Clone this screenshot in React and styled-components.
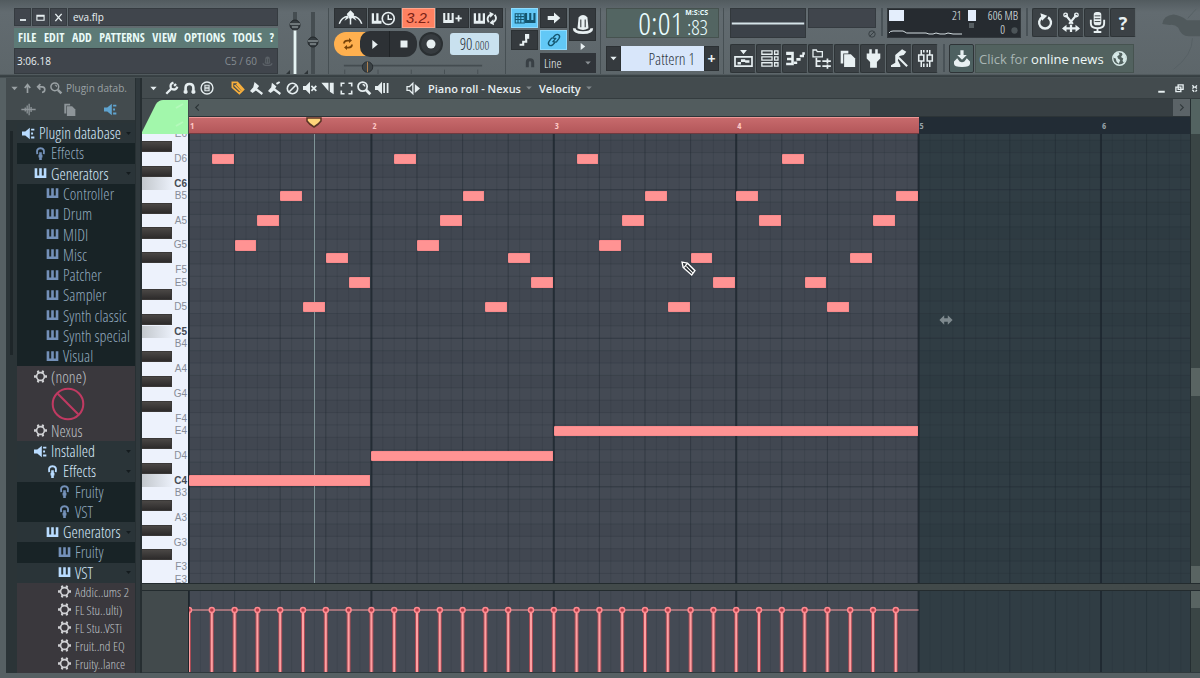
import React from "react";
import styled, { createGlobalStyle, css } from "styled-components";

const BARS = 5.488;
const STEPS = BARS * 8;
const ROWS = 36.27;
const TOP_CUT = 0.5;
const SONG_STEPS = 32;

const NAMES = ["E", "D#", "D", "C#", "C", "B", "A#", "A", "G#", "G", "F#", "F"];

// keys from E6 down to E3
const keys = Array.from({ length: 37 }, (_, i) => {
    const name = NAMES[i % 12];
    const octave = 6 - Math.floor((i + 7) / 12);
    return { name, octave, label: name + octave, black: name.includes("#") };
});

const rowOf = (label) => keys.findIndex((k) => k.label === label);
const pctX = (step) => `${(step / STEPS) * 100}%`;
const pctY = (row) => `${((row - TOP_CUT) / ROWS) * 100}%`;

const notes = [
    ...[0, 8, 16].flatMap((s) => [
        ["D6", s + 1, 1], ["G5", s + 2, 1], ["A5", s + 3, 1], ["B5", s + 4, 1],
        ["D5", s + 5, 1], ["F#5", s + 6, 1], ["E5", s + 7, 1],
    ]),
    ["B5", 24, 1], ["A5", 25, 1], ["D6", 26, 1], ["E5", 27, 1],
    ["D5", 28, 1], ["F#5", 29, 1], ["A5", 30, 1], ["B5", 31, 1],
    ["C4", 0, 8], ["D4", 8, 8], ["E4", 16, 16],
];

const tree = [
    { text: "Plugin database", level: 0, icon: "plug", kind: "open" },
    { text: "Effects", level: 1, icon: "fx", kind: "closed" },
    { text: "Generators", level: 1, icon: "keys", kind: "open" },
    { text: "Controller", level: 2, icon: "keys", kind: "closed" },
    { text: "Drum", level: 2, icon: "keys", kind: "closed" },
    { text: "MIDI", level: 2, icon: "keys", kind: "closed" },
    { text: "Misc", level: 2, icon: "keys", kind: "closed" },
    { text: "Patcher", level: 2, icon: "keys", kind: "closed" },
    { text: "Sampler", level: 2, icon: "keys", kind: "closed" },
    { text: "Synth classic", level: 2, icon: "keys", kind: "closed" },
    { text: "Synth special", level: 2, icon: "keys", kind: "closed" },
    { text: "Visual", level: 2, icon: "keys", kind: "closed" },
    { text: "(none)", level: 1, icon: "gear", kind: "plugin" },
    { kind: "preview" },
    { text: "Nexus", level: 1, icon: "gear", kind: "plugin" },
    { text: "Installed", level: 1, icon: "plug", kind: "open" },
    { text: "Effects", level: 2, icon: "fx", kind: "open" },
    { text: "Fruity", level: 3, icon: "fx", kind: "closed" },
    { text: "VST", level: 3, icon: "fx", kind: "closed" },
    { text: "Generators", level: 2, icon: "keys", kind: "open" },
    { text: "Fruity", level: 3, icon: "keys", kind: "closed" },
    { text: "VST", level: 3, icon: "keys", kind: "open" },
    { text: "Addic..ums 2", level: 3, icon: "gear", kind: "plugin", small: true },
    { text: "FL Stu..ulti)", level: 3, icon: "gear", kind: "plugin", small: true },
    { text: "FL Stu..VSTi", level: 3, icon: "gear", kind: "plugin", small: true },
    { text: "Fruit..nd EQ", level: 3, icon: "gear", kind: "plugin", small: true },
    { text: "Fruity..lance", level: 3, icon: "gear", kind: "plugin", small: true },
];

// every icon is drawn on a 20 x 20 board
const shapes = {
    min: <path d="M5 15h10" strokeWidth="3" />,
    max: <path d="M2 5h16v11H2z M2 7h16" strokeWidth="2.5" />,
    close: <path d="M3 2l14 16M17 2L3 18" strokeWidth="3" />,
    down: <path d="M3 6h14l-7 8z" fill="currentColor" stroke="none" />,
    right: <path d="M6 2v16l10-8z" fill="currentColor" stroke="none" />,
    up: <path d="M10 18V4M5 9l5-6 5 6" strokeWidth="3" />,
    undo: <path d="M8 2L3 7l5 5M4 7h7q5 0 5 5t-5 5" strokeWidth="3" />,
    chevL: <path d="M13 3l-7 7 7 7" strokeWidth="2.5" />,
    chevR: <path d="M7 3l7 7-7 7" strokeWidth="2.5" />,
    keys: <path d="M1 2h4v11h3V2h4v11h3V2h4v15H1z" fill="currentColor" stroke="none" />,
    keysPlus: <><path d="M-4 3h3v10h3V3h3v10h3V3h3v14H-4z" fill="currentColor" stroke="none" /><path d="M18 6v9M13.500 10.500h9" strokeWidth="2.500" /></>,
    keysClock: <><path d="M-7 3h3v10h3V3h3v10h4v4H-7z" fill="currentColor" stroke="none" /><circle cx="15" cy="10" r="8" strokeWidth="2.200" /><path d="M15 5v6h5" strokeWidth="2" /></>,
    keysLoop: <><path d="M-7 3h3v10h3V3h3v10h3V3h3v14H-7z" fill="currentColor" stroke="none" /><path d="M13 15q-4-6 2-10M21 5q4 6-2 10" strokeWidth="2.500" /><path d="M14 1l6 3-5 5zM20 19l-6-3 5-5z" fill="currentColor" stroke="none" /></>,
    metro: <><path d="M-5 17Q-2 8 7 7M25 17Q22 8 13 7M10 8v10" strokeWidth="2" /><path d="M5 4l5-5 5 5-3 6H8zM6 5l-4 8 6-4zM14 5l4 8-6-4z" fill="currentColor" stroke="none" /></>,
    loop: <><path d="M2 9q0-6 7-6h4M18 11q0 6-7 6H7" strokeWidth="3.500" /><path d="M12-2l6 5-6 5zM8 22l-6-5 6-5z" fill="currentColor" stroke="none" /></>,
    stop: <path d="M3 3h14v14H3z" fill="currentColor" stroke="none" />,
    dot: <circle cx="10" cy="10" r="9" fill="currentColor" stroke="none" />,
    typing: <><path d="M-4 4h13v13H-4zM-4 8h13M-4 12h13M0 4v13M4 4v13" strokeWidth="1.500" /><path d="M10 3h3v10h3V3h3v10h3V3h3v14H10z" fill="currentColor" stroke="none" /></>,
    arrow: <path d="M1 7h9V2l9 8-9 8v-5H1z" fill="currentColor" stroke="none" />,
    slide: <><path d="M1 18h6v-5h5V5" strokeWidth="3.500" /><path d="M10 0h7v8h-7z" fill="currentColor" stroke="none" /></>,
    link: <path d="M8 13l5-6M9 6l3-3q3-2 5 0t0 5l-3 4q-2 2-5 0M11 14l-3 3q-3 2-5 0t0-5l3-4q2-2 5 0" strokeWidth="2" />,
    knob: <><path d="M6 3q4-4 8 0l1 10q-5 3-10 0z" fill="currentColor" stroke="none" /><path d="M8 5v7M12 5v7" stroke="#353a3e" strokeWidth="1" /><path d="M2 13q0 4 8 4t8-4" strokeWidth="2.500" /></>,
    magnet: <path d="M3 17V9q0-7 7-7t7 7v8h-5V9q0-2-2-2T8 9v8z" fill="currentColor" stroke="none" />,
    playlist: <><path d="M0 8h20v11H0z" strokeWidth="2" /><path d="M6 0h8l-4 5zM3 14h4v3H3zM7 11h5v3H7zM12 12h5v3h-5z" fill="currentColor" stroke="none" /></>,
    stepseq: <path d="M1 1h12v4H1zM1 8h12v4H1zM1 15h12v4H1zM16 1h4v4h-4zM16 8h4v4h-4zM16 15h4v4h-4z" strokeWidth="1.500" />,
    pianoroll: <><path d="M-1 2h9v16h-9v-3h6v-3h-5V9h5V6h-6z" fill="currentColor" stroke="none" /><path d="M8 15h4M11 11h5M15 7h5M18 4h3" strokeWidth="3" /></>,
    browser: <><path d="M0 0h4l1 2h6v6H0z" strokeWidth="1.500" /><path d="M4 9v10h5M4 13h5M11 13h10M11 19h10M17 10v6M17 17v5" strokeWidth="2" /></>,
    files: <><path d="M2 1h9v3H5v12H2z" fill="currentColor" stroke="none" /><path d="M6 5h8l5 5v10H6z" fill="currentColor" stroke="none" /></>,
    cable: <path d="M5-1h3v5h4v-5h3v5h3v6l-4 4v7H6v-7l-4-4V4h3z" fill="currentColor" stroke="none" />,
    tempo: <><path d="M5 6l8-7 5 3-3 4-5 1-2 5 3 6v2H0v-2l5-3z" fill="currentColor" stroke="none" /><path d="M9 9l10 10" strokeWidth="2.500" /></>,
    mixer: <path d="M5 0v6M5 13v7M15 0v6M15 13v7M2 6h6v7H2zM12 6h6v7h-6zM8 0v3M12 0v3M8 16v4M12 16v4" strokeWidth="1.800" />,
    redo: <><path d="M13 4a7 7 0 1 1-7 0" strokeWidth="2.800" /><path d="M4-1l8 3-6 6z" fill="currentColor" stroke="none" /></>,
    cut: <><path d="M4 1l8 10M16 1L8 11" strokeWidth="2.500" /><circle cx="4" cy="1" r="2" strokeWidth="1.500" /><circle cx="16" cy="1" r="2" strokeWidth="1.500" /><path d="M2 16h16M10 12v8" strokeWidth="2.500" /><path d="M0 16l5-4v8zM20 16l-5-4v8z" fill="currentColor" stroke="none" /></>,
    mic: <><rect x="6" y="-1" width="8" height="14" rx="3" fill="currentColor" stroke="none" /><path d="M3 7v4q0 5 7 5t7-5V7M10 16v3M6 20h8" strokeWidth="2" /><path d="M7 3h6M7 6h6M7 9h6" stroke="#3b4145" strokeWidth="1" /></>,
    save: <><path d="M8-1h4v6h4l-6 6-6-6h4z" fill="currentColor" stroke="none" /><path d="M4 9l-4 4v3q0 4 10 4t10-4v-3l-4-4-3 4q-3 2-6 0z" fill="currentColor" stroke="none" /></>,
    globe: <><circle cx="10" cy="10" r="9" strokeWidth="1.800" /><path d="M2 6q3-4 7-4l1 3-3 2 1 3 3 2-2 5-3-3-1-4-3-1zM13 2l4 3 2 6-3 5-2-3 1-3-3-2 2-3z" fill="currentColor" stroke="none" /></>,
    wrench: <path d="M2 18l9-9M17 3l-3 3M9 9q-2-6 4-8M19 7q-2 6-8 4" strokeWidth="3.500" />,
    snap: <path d="M4 18V9q0-6 6-6t6 6v9M1 15h6M13 15h6" strokeWidth="4" />,
    stamp: <><circle cx="10" cy="10" r="8.500" strokeWidth="2" /><path d="M7 6h6v8H7zM7 9h6M7 11h6" strokeWidth="1.500" /></>,
    pencil: <path d="M2 2l7 0 9 10-6 6L2 9zM5 6l9 9M8 4l8 9" strokeWidth="2.500" />,
    brush: <path d="M7 0l7 6-3 4 9 7-2 3-9-7-5 4-4-3 5-6z" fill="currentColor" stroke="none" />,
    brushPlus: <><path d="M6 1l7 6-2 3 9 7-2 3-9-7-5 4-4-3 5-6z" fill="currentColor" stroke="none" /><path d="M13 3l5-3" strokeWidth="3" /></>,
    erase: <><circle cx="10" cy="10" r="8" strokeWidth="2.500" /><path d="M5 15L15 5" strokeWidth="2.500" /></>,
    mute: <><path d="M0 7h4l6-6v18l-6-6H0z" fill="currentColor" stroke="none" /><path d="M12 7l7 7M19 7l-7 7" strokeWidth="2.500" /></>,
    slice: <path d="M-1 1h11v13zM12 1h6v18l-6-4z" fill="currentColor" stroke="none" />,
    select: <path d="M2 7V2h5M13 2h5v5M18 13v5h-5M7 18H2v-5" strokeWidth="2.500" />,
    zoom: <><circle cx="8" cy="8" r="6.500" strokeWidth="2.500" /><path d="M13 13l6 6" strokeWidth="4" /><path d="M8 5q3 0 3 3" strokeWidth="2" /></>,
    playback: <><path d="M0 7h4l6-6v18l-6-6H0z" fill="currentColor" stroke="none" /><path d="M13 3v14M18 3v14" strokeWidth="2.500" /></>,
    speaker: <><path d="M0 7h4l5-5v16l-5-5H0z" strokeWidth="2" /><path d="M12 3l8 7-8 7z" fill="currentColor" stroke="none" /></>,
    restore: <path d="M7 2h11v10H7zM2 7h11v10H2z" strokeWidth="3" />,
    dots: <path d="M3 3l4 4-4 3M3 13l4 4M13 3l-3 4 3 3M13 13l-3 4" strokeWidth="3" />,
    wave: <path d="M-1 10h22M5 7v6M8 4v12M11 1v18M14 6v8" strokeWidth="2" />,
    plug: <><path d="M0 7h5l7-6v18l-7-6H0z" fill="currentColor" stroke="none" /><path d="M14 4h5M14 10h3M14 16h5" strokeWidth="3" /></>,
    fx: <><path d="M5 11q-2-9 5-9t5 9" strokeWidth="3" /><path d="M10 8v12M7 14h6" strokeWidth="4" /></>,
    gear: <><circle cx="10" cy="10" r="6" strokeWidth="2.500" /><path d="M6 1l1 4M14 1l-1 4M6 19l1-4M14 19l-1-4M0 10h4M16 10h4" strokeWidth="3.500" /></>,
    none: <><circle cx="10" cy="10" r="9" strokeWidth="1.200" /><path d="M4 4l12 12" strokeWidth="1.200" /></>,
    resize: <path d="M-1 10l8-8v5h6V2l8 8-8 8v-5H7v5z" fill="currentColor" stroke="none" />,
};

const Icon = ({ name, size = 14, label }) => (
    <Svg viewBox="0 0 20 20" width={size} height={size} aria-label={label} aria-hidden={!label}>
        {shapes[name]}
    </Svg>
);

const App = () => {
    return (
        <Screen>
            <GlobalStyle />
            <TopBar />
            <Workspace>
                <Browser />
                <PianoRoll />
            </Workspace>
        </Screen>
    );
};

const TopBar = () => (
    <Header>
        <MenuBlock>
            <TitleRow>
                <WindowButton aria-label="Minimize"><Icon name="min" size={12} /></WindowButton>
                <WindowButton aria-label="Maximize"><Icon name="max" size={9} /></WindowButton>
                <WindowButton aria-label="Close"><Icon name="close" size={9} /></WindowButton>
                <ProjectName>eva.flp</ProjectName>
            </TitleRow>
            <MenuRow>
                {["FILE", "EDIT", "ADD", "PATTERNS", "VIEW", "OPTIONS", "TOOLS", "?"].map((m) => (
                    <MenuButton key={m}>{m}</MenuButton>
                ))}
            </MenuRow>
            <HintRow>
                <span>3:06.18</span>
                <HintRight>C5 / 60 <Icon name="knob" size={11} /></HintRight>
            </HintRow>
        </MenuBlock>

        <Faders viewBox="0 0 44 70" role="img" aria-label="Main volume and pitch">
            <path d="M11 4v62M29 4v62" stroke="#454d51" strokeWidth="4" />
            <path d="M11 18v48" stroke="#e6f4f4" strokeWidth="3" />
            <circle cx="11" cy="17" r="5" fill="#353c40" stroke="#23282b" />
            <circle cx="29" cy="34" r="5" fill="#353c40" stroke="#23282b" />
            <path d="M6 16h10M8 19h6M24 33h10M26 36h6" stroke="#aab3b5" />
            <path d="M2 66h4v-4zM20 66h4v-4z" fill="#2e3538" />
        </Faders>

        <Transport>
            <ButtonLine>
                <ToolButton $wide aria-label="Metronome"><Icon name="metro" size={15} /></ToolButton>
                <ToolButton $wide aria-label="Wait for input"><Icon name="keysClock" size={15} /></ToolButton>
                <ToolButton $wide $tone="red" aria-label="Countdown"><Countdown>3.2.</Countdown></ToolButton>
                <ToolButton $wide aria-label="Overdub"><Icon name="keysPlus" size={14} /></ToolButton>
                <ToolButton $wide aria-label="Loop record"><Icon name="keysLoop" size={15} /></ToolButton>
            </ButtonLine>
            <PlayLine>
                <LoopButton aria-label="Song mode"><Icon name="loop" size={10} /></LoopButton>
                <PlayButton aria-label="Play"><Icon name="right" size={11} /></PlayButton>
                <StopButton aria-label="Stop"><Icon name="stop" size={10} /></StopButton>
                <RecordButton aria-label="Record"><Icon name="dot" size={10} /></RecordButton>
                <Tempo aria-label="Tempo">90<small>.000</small></Tempo>
            </PlayLine>
            <Position viewBox="0 0 166 16" role="img" aria-label="Song position">
                <path d="M4 6.500h158" stroke="#444c50" strokeWidth="2" />
                <path d="M5 11v5M43 11v5M81 11v5M119 11v5M157 11v5" stroke="#454d51" />
                <circle cx="31" cy="8" r="6" fill="#3b4245" stroke="#23282b" />
                <path d="M31 2v12" stroke="#c08a50" />
            </Position>
        </Transport>

        <EditPanel>
            <EditGrid>
                <ToolButton $tone="blue" aria-label="Typing keyboard"><Icon name="typing" size={14} /></ToolButton>
                <ToolButton aria-label="Auto scroll"><Icon name="arrow" size={14} /></ToolButton>
                <ToolButton aria-label="Step edit"><Icon name="slide" size={12} /></ToolButton>
                <ToolButton $tone="blue" aria-label="Link"><Icon name="link" size={14} /></ToolButton>
            </EditGrid>
            <KnobColumn>
                <KnobButton aria-label="Multilink"><Icon name="knob" size={22} /></KnobButton>
                <Icon name="right" size={9} />
            </KnobColumn>
            <SnapRow>
                <DimIcon><Icon name="magnet" size={12} /></DimIcon>
                <SnapBox>
                    <SnapSelect aria-label="Snap" defaultValue="Line"><option>Line</option></SnapSelect>
                    <Icon name="down" size={8} />
                </SnapBox>
            </SnapRow>
        </EditPanel>

        <PatternPanel>
            <Clock>
                <span>0:01</span>
                <ClockTail><i>M:S:CS</i><span>:83</span></ClockTail>
            </Clock>
            <PatternRow>
                <PatternButton aria-label="Pattern menu"><Icon name="down" size={9} /></PatternButton>
                <PatternInput aria-label="Pattern name" defaultValue="Pattern 1" />
                <PatternButton aria-label="Add pattern">+</PatternButton>
            </PatternRow>
        </PatternPanel>

        <RightPanels>
            <PanelRow>
                <Scope viewBox="0 0 75 29" aria-label="Scope"><path d="M0 15h75" stroke="#d5e3e8" strokeWidth="2" /></Scope>
                <PeakColumn><Peak /><Icon name="erase" size={8} /></PeakColumn>
                <Divider />
                <CpuPanel>
                    <CpuGraph viewBox="0 0 76 28" aria-label="Processor load">
                        <path d="M1 1h15v11H1z" fill="#e4eefc" />
                        <path d="M1 24q1-2 4-2h10q4 3 7 2h16l3 1h4l3-1 4 1h5l3-1 5 1h9" fill="none" stroke="#d2dcdf" />
                    </CpuGraph>
                    <CpuCount>21</CpuCount>
                    <MemBars viewBox="0 0 8 28"><path d="M0 1h8v11H0z" fill="#e4eefc" /><path d="M1 14h5v5H1z" fill="#555d61" /></MemBars>
                    <MemText><span>606 MB</span><MemZero>0 <Icon name="dot" size={7} /></MemZero></MemText>
                </CpuPanel>
                <Divider />
                <IconLine>
                    <SquareButton aria-label="Undo"><Icon name="redo" size={17} /></SquareButton>
                    <SquareButton aria-label="Cut"><Icon name="cut" size={18} /></SquareButton>
                    <SquareButton aria-label="Record audio"><Icon name="mic" size={19} /></SquareButton>
                    <SquareButton aria-label="Help"><HelpMark>?</HelpMark></SquareButton>
                </IconLine>
            </PanelRow>
            <PanelRow>
                <IconLine>
                    {["playlist", "stepseq", "pianoroll", "browser", "files", "cable", "tempo", "mixer"].map((n) => (
                        <SquareButton key={n} aria-label={n}><Icon name={n} size={17} /></SquareButton>
                    ))}
                </IconLine>
                <Divider />
                <SquareButton $teal aria-label="Save"><Icon name="save" size={16} /></SquareButton>
                <News href="#news">
                    <span>Click for <b>online news</b></span>
                    <Icon name="globe" size={15} />
                </News>
            </PanelRow>
        </RightPanels>
        <Watermark viewBox="0 0 66 70" preserveAspectRatio="xMaxYMin meet" aria-hidden="true">
            <path d="M26 17q1-9 12-10 8 1 14 6h14v17H54q-8 0-11-9-4-4-9-3z" fill="#50595c" />
            <path d="M53 11L62 1M58 32q0 18-20 33" stroke="#566064" strokeWidth="1" fill="none" />
        </Watermark>
    </Header>
);

const Browser = () => (
    <Side>
        <SideHead>
            <Icon name="down" size={9} />
            <Icon name="up" size={11} />
            <Icon name="undo" size={11} />
            <Icon name="zoom" size={12} />
            <span>Plugin datab.</span>
        </SideHead>
        <SideTabs>
            <SideTab aria-label="Sounds"><Icon name="wave" size={13} /></SideTab>
            <SideTab aria-label="Files"><Icon name="files" size={13} /></SideTab>
            <SideTab $active aria-label="Plugins"><Icon name="plug" size={13} /></SideTab>
        </SideTabs>
        <TreeWrap>
            <TreeScroll><TreeThumb /></TreeScroll>
            <Tree>
                {tree.map((item, i) =>
                    item.kind === "preview" ? (
                        <Preview key={i}><Icon name="none" size={34} /></Preview>
                    ) : (
                        <TreeRow key={i} $kind={item.kind} $level={item.level} $small={item.small}>
                            <Icon name={item.icon} size={13} />
                            <span>{item.text}</span>
                            {item.kind === "open" && <Caret><Icon name="down" size={7} /></Caret>}
                        </TreeRow>
                    )
                )}
            </Tree>
        </TreeWrap>
    </Side>
);

const PianoRoll = () => (
    <Roll>
        <RollTools>
            <ToolGroup>
                <Tool aria-label="Options"><Icon name="down" size={9} /></Tool>
                <Tool aria-label="Tools"><Icon name="wrench" size={13} /></Tool>
                <Tool aria-label="Snap"><Icon name="snap" size={13} /></Tool>
                <Tool aria-label="Stamp"><Icon name="stamp" /></Tool>
            </ToolGroup>
            <ToolGroup>
                <Tool $active aria-label="Draw"><Icon name="pencil" /></Tool>
                <Tool aria-label="Paint"><Icon name="brush" size={13} /></Tool>
                <Tool aria-label="Paint drums"><Icon name="brushPlus" size={13} /></Tool>
                <Tool aria-label="Delete"><Icon name="erase" size={13} /></Tool>
                <Tool aria-label="Mute"><Icon name="mute" /></Tool>
                <Tool aria-label="Slice"><Icon name="slice" size={13} /></Tool>
                <Tool aria-label="Select"><Icon name="select" size={13} /></Tool>
                <Tool aria-label="Zoom"><Icon name="zoom" /></Tool>
                <Tool aria-label="Playback"><Icon name="playback" /></Tool>
            </ToolGroup>
            <Tool aria-label="Preview"><Icon name="speaker" size={13} /></Tool>
            <RollTitle>Piano roll - Nexus <Icon name="down" size={8} /></RollTitle>
            <RollTitle>Velocity <Icon name="down" size={8} /></RollTitle>
            <RollWindow>
                <Icon name="min" size={13} />
                <Icon name="restore" size={9} />
                <Icon name="dots" size={9} />
            </RollWindow>
        </RollTools>

        <RollGrid>
            <Corner viewBox="0 0 46 35" preserveAspectRatio="none" aria-hidden="true">
                <path d="M0 33L14 5q3-4 7-4h25v34H0z" fill="#a2f7ab" />
                <path d="M34 9l7-4M34 27l7-4" stroke="#b4f9bb" strokeWidth="2" />
            </Corner>
            <TimeArea>
                <ScrollBar>
                    <ScrollThumb><Icon name="chevL" size={9} /></ScrollThumb>
                    <ScrollEnd aria-label="Scroll right"><Icon name="chevR" size={9} /></ScrollEnd>
                </ScrollBar>
                <Ruler>
                    <RulerSong style={{ width: pctX(SONG_STEPS) }} />
                    {[1, 2, 3, 4, 5, 6].map((bar) => (
                        <BarNumber key={bar} $dim={bar > 4} style={{ left: pctX((bar - 1) * 8) }}>{bar}</BarNumber>
                    ))}
                </Ruler>
            </TimeArea>
            <SideScroll $light />

            <Keyboard>
                {keys.map((key, i) => (
                    <Key key={key.label} $c={key.name === "C"} style={{ top: pctY(i), height: `${100 / ROWS}%` }}>
                        {key.black ? <BlackKey /> : <KeyLabel $c={key.name === "C"}>{key.label}</KeyLabel>}
                    </Key>
                ))}
            </Keyboard>
            <Lane>
                <Grid />
                <PlayLineMark style={{ left: pctX(5.5) }} />
                {notes.map(([label, start, length]) => (
                    <Note
                        key={label + start}
                        style={{
                            left: pctX(start),
                            top: pctY(rowOf(label)),
                            width: pctX(length),
                            height: `${100 / ROWS}%`,
                        }}
                    />
                ))}
                <PlayHead style={{ left: pctX(5.5) }} viewBox="0 0 16 11">
                    <path d="M1 1h14v3q-2 3-7 6-5-3-7-6z" fill="#ffd479" stroke="#593426" strokeWidth="1.500" />
                </PlayHead>
                <Pointer viewBox="0 0 14 14">
                    <path d="M1 1l5 1 7 7-3 4-8-7zM3 6l3-4" fill="#20262b" stroke="#fff" strokeWidth="1.300" />
                    <path d="M5 5l6 6" stroke="#fff" />
                </Pointer>
                <ResizeMark><Icon name="resize" size={12} /></ResizeMark>
            </Lane>
            <SideScroll><SideThumb /><SideFoot /></SideScroll>

            <Splitter />

            <LaneBlank />
            <VelocityLane>
                <Grid flat />
                <Stems />
            </VelocityLane>
            <SideScroll><SideTop /></SideScroll>
        </RollGrid>
    </Roll>
);

const Grid = ({ flat }) => (
    <Canvas aria-hidden="true">
        <rect width={pctX(SONG_STEPS)} height="100%" fill="#444a54" />
        <rect x={pctX(SONG_STEPS)} width="100%" height="100%" fill="#303d44" />
        {!flat && keys.map((k, i) => (
            <React.Fragment key={k.label}>
                {k.black && <rect y={pctY(i)} width="100%" height={`${100 / ROWS}%`} fill="#1c2730" opacity="0.07" />}
                <line x1="0" x2="100%" y1={pctY(i + 1)} y2={pctY(i + 1)} stroke="#242d36" opacity={k.name === "C" ? 0.6 : 0.22} />
            </React.Fragment>
        ))}
        {Array.from({ length: 88 }, (_, i) => (
            <line
                key={i}
                x1={pctX(i / 2)} x2={pctX(i / 2)} y1="0" y2="100%"
                stroke="#1d262e"
                strokeWidth={i % 16 === 0 ? 2 : 1}
                opacity={i % 16 === 0 ? 0.8 : i % 4 === 0 ? 0.42 : 0.14}
            />
        ))}
    </Canvas>
);

const Stems = () => (
    <Canvas role="img" aria-label="Note velocities">
        <line x1="0" x2={pctX(SONG_STEPS)} y1="19" y2="19" stroke="#ff9ba0" strokeWidth="1" />
        {Array.from({ length: SONG_STEPS }, (_, i) => (
            <React.Fragment key={i}>
                <line x1={pctX(i)} x2={pctX(i)} y1="20" y2="100%" stroke="#a84a54" strokeWidth="4" />
                <line x1={pctX(i)} x2={pctX(i)} y1="20" y2="100%" stroke="#ffa0a2" strokeWidth="2" />
                <circle cx={pctX(i)} cy="19" r="2.500" fill="#b53d49" stroke="#ff8a90" strokeWidth="1.500" />
            </React.Fragment>
        ))}
    </Canvas>
);

const narrow = `"Open Sans Condensed Light", "Open Sans Condensed", "Liberation Sans Narrow", "Liberation Sans", sans-serif`;

const GlobalStyle = createGlobalStyle`
    * {
        box-sizing: border-box;
    }
    body {
        margin: 0;
        background: #3c4548;
        font-family: "Open Sans", "Noto Sans", sans-serif;
        font-size: 10px;
        color: #e8f0f2;
    }
    button, input, select {
        font: inherit;
        color: inherit;
        border: 0;
        padding: 0;
        margin: 0;
        border-radius: 0;
        background: none;
    }
`;

const Svg = styled.svg`
    display: block;
    flex: none;
    overflow: visible;
    fill: none;
    stroke: currentColor;
`;

const Screen = styled.div`
    display: flex;
    flex-direction: column;
    height: 100vh;
    overflow: hidden;
`;

const Header = styled.header`
    display: flex;
    height: 78px;
    flex: none;
    padding: 8px 0 0 14px;
    background: linear-gradient(#525b5f, #626b70 12px, #5d666a 74px, #2f373a 76px, #4e575a 78px);
`;

const dark = css`
    background: #40454c;
    border: 1px solid #353b40;
`;

const condensed = css`
    font-family: ${narrow};
    font-weight: 300;
`;

const MenuBlock = styled.div`
    width: 264px;
    height: 66px;
    display: flex;
    flex-direction: column;
`;

const TitleRow = styled.div`
    display: flex;
    gap: 1px;
    height: 18px;
    margin-bottom: 2px;
`;

const WindowButton = styled.button`
    ${dark}
    width: 17px;
    display: flex;
    align-items: center;
    justify-content: center;
`;

const ProjectName = styled.div`
    ${dark}
    flex: 1;
    padding-left: 4px;
    line-height: 16px;
`;

const MenuRow = styled.nav`
    display: flex;
    justify-content: space-between;
    align-items: center;
    height: 20px;
    padding: 0 4px;
    background: #5d7a76;
`;

const MenuButton = styled.button`
    font-family: "Open Sans Condensed", "Liberation Sans Narrow", sans-serif;
    font-size: 12px;
    line-height: 16px;
    font-weight: bold;
    color: #e9fbf8;
`;

const HintRow = styled.div`
    ${dark}
    flex: 1;
    display: flex;
    justify-content: space-between;
    align-items: center;
    padding: 0 4px 0 2px;
`;

const HintRight = styled.span`
    display: flex;
    align-items: center;
    gap: 5px;
    color: #858c92;

    svg {
        color: #5b6167;
    }
`;

const Faders = styled.svg`
    width: 44px;
    height: 70px;
    margin-left: 6px;
    fill: none;
`;

const Panel = styled.section`
    border-left: 1px solid #464f53;
    padding-left: 5px;
    flex: none;
`;

const Transport = styled(Panel)`
    width: 177px;
    height: 66px;
    display: flex;
    flex-direction: column;
    gap: 3px;
`;

const ButtonLine = styled.div`
    display: flex;
    gap: 1px;
`;

const tones = {
    red: "background: #ff8161; color: #7c2215; border-color: #ffa58c;",
    blue: "background: #62c8f6; color: #14566f; border-color: #8edcff;",
};

const ToolButton = styled.button`
    display: flex;
    align-items: center;
    justify-content: center;
    width: ${(p) => (p.$wide ? 33 : 27)}px;
    height: 20px;
    background: #353a3e;
    border: 1px solid #2c3134;
    ${(p) => tones[p.$tone]}
`;

const Countdown = styled.span`
    font: italic 15px/16px "Liberation Sans", sans-serif;
`;

const PlayLine = styled.div`
    display: flex;
    align-items: center;
    height: 26px;
`;

const LoopButton = styled.button`
    display: flex;
    align-items: center;
    padding-left: 9px;
    width: 34px;
    height: 24px;
    border-radius: 12px 0 0 12px;
    background: #ffb04f;
    color: #784309;
`;

const PlayButton = styled.button`
    display: flex;
    align-items: center;
    justify-content: center;
    width: 29px;
    height: 26px;
    margin-left: -8px;
    border-radius: 10px 0 0 10px;
    background: #2d3135;
`;

const StopButton = styled(PlayButton)`
    margin-left: 0;
    width: 28px;
    border-left: 1px solid #1f2326;
    border-radius: 0 12px 12px 0;
`;

const RecordButton = styled(PlayButton)`
    width: 24px;
    height: 24px;
    margin: 0 7px 0 2px;
    border-radius: 50%;
    background: #363b3f;
    border: 2px solid #2a2f32;
`;

const Tempo = styled.button`
    ${condensed}
    width: 49px;
    height: 22px;
    border-radius: 3px;
    background: #c9e1ef;
    color: #27313a;
    font-size: 16px;
    line-height: 22px;

    small {
        font-size: 12px;
    }
`;

const Position = styled.svg`
    width: 166px;
    height: 16px;
    margin-left: -4px;
    fill: none;
`;

const EditPanel = styled(Panel)`
    display: grid;
    grid-template-columns: 57px 27px;
    grid-template-rows: 43px 20px;
    gap: 2px 1px;
    height: 66px;
    width: 95px;
`;

const EditGrid = styled.div`
    display: grid;
    grid-template-columns: 27px 27px;
    grid-template-rows: 20px 20px;
    gap: 2px;
`;

const KnobColumn = styled.div`
    display: flex;
    flex-direction: column;
    align-items: center;
    gap: 1px;
`;

const KnobButton = styled(ToolButton)`
    height: 33px;
`;

const SnapRow = styled.div`
    grid-column: 1 / -1;
    display: flex;
    align-items: center;
    justify-content: flex-end;
    gap: 4px;
`;

const DimIcon = styled.span`
    display: inline-flex;
    color: #394045;
`;

const SnapBox = styled.div`
    display: flex;
    align-items: center;
    width: 56px;
    height: 20px;
    padding: 0 4px;
    background: #303439;
    color: #8b9195;
`;

const SnapSelect = styled.select`
    flex: 1;
    min-width: 0;
    appearance: none;
    && {
        ${condensed}
        color: #eef3f5;
        font-size: 13px;
    }
`;

const PatternPanel = styled(Panel)`
    width: 123px;
    height: 66px;
    display: flex;
    flex-direction: column;
    gap: 8px;
`;

const Clock = styled.div`
    ${condensed}
    display: flex;
    justify-content: flex-end;
    align-items: center;
    gap: 2px;
    height: 30px;
    width: 113px;
    padding-right: 10px;
    background: #536562;
    border: 1px solid #46524f;
    color: #eafdff;
    font-size: 32px;
    line-height: 28px;
`;

const ClockTail = styled.span`
    display: flex;
    flex-direction: column;
    align-items: flex-end;
    font-size: 21px;
    line-height: 20px;

    i {
        font: bold 7px/8px "Open Sans", sans-serif;
    }
`;

const PatternRow = styled.div`
    display: flex;
    height: 25px;
    width: 113px;
`;

const PatternButton = styled.button`
    display: flex;
    align-items: center;
    justify-content: center;
    width: 15px;
    background: #353a3e;
    border: 1px solid #2c3134;
    font-size: 14px;
    font-weight: bold;
`;

const PatternInput = styled.input`
    flex: 1;
    min-width: 0;
    && {
        ${condensed}
        padding-right: 9px;
        text-align: right;
        background: #d8e6fa;
        color: #2c3540;
        font-size: 16px;
    }
`;

const RightPanels = styled.div`
    display: flex;
    flex-direction: column;
    gap: 6px;
    border-left: 1px solid #464f53;
    padding-left: 6px;
    height: 66px;
    width: 413px;
    flex: none;
`;

const PanelRow = styled.div`
    display: flex;
    align-items: flex-start;
    height: 30px;
`;

const Scope = styled.svg`
    width: 76px;
    height: 30px;
    background: #3b4148;
    border: 1px solid #32383c;
`;

const PeakColumn = styled.div`
    display: flex;
    flex-direction: column;
    align-items: flex-end;
    gap: 2px;
    flex: 1;
    margin-left: 2px;
    color: #384044;
`;

const Peak = styled.div`
    ${dark}
    width: 100%;
    height: 20px;
`;

const Divider = styled.div`
    width: 2px;
    height: 28px;
    margin: 0 4px 0 5px;
    background: #495257;
`;

const CpuPanel = styled.div`
    ${condensed}
    display: flex;
    width: 134px;
    height: 30px;
    background: #262b30;
    border: 1px solid #32383c;
    font-size: 12px;
    line-height: 14px;
`;

const CpuGraph = styled.svg`
    width: 76px;
    height: 28px;
    margin-right: -12px;
`;

const CpuCount = styled.span`
    width: 12px;
`;

const MemBars = styled.svg`
    width: 8px;
    height: 28px;
    margin-left: 4px;
`;

const MemText = styled.div`
    flex: 1;
    display: flex;
    flex-direction: column;
    align-items: flex-end;
    padding-right: 2px;
    white-space: nowrap;
`;

const MemZero = styled.span`
    display: flex;
    align-items: center;
    gap: 6px;

    svg {
        color: #4c5458;
    }
`;

const IconLine = styled.div`
    display: flex;
`;

const SquareButton = styled.button`
    display: flex;
    align-items: center;
    justify-content: center;
    width: 25px;
    height: 29px;
    margin-right: 1px;
    border: 1px solid #2e3437;
    border-radius: 2px;
    background: ${(p) => (p.$teal ? "#4d6060" : "#3b4145")};

    ${IconLine} & {
        margin-right: 0;
        width: 26px;
        border-right-color: #5d666a;
    }
`;

const HelpMark = styled.span`
    font-size: 18px;
    font-weight: bold;
`;

const News = styled.a`
    flex: 1;
    display: flex;
    align-items: center;
    justify-content: space-between;
    height: 29px;
    margin: 0 2px 0 0;
    padding: 0 6px 0 3px;
    background: #52625f;
    border: 1px solid #465350;
    color: #a9b6b4;
    font-size: 13px;
    text-decoration: none;
    white-space: nowrap;

    b {
        font-weight: normal;
        color: #eef8f7;
    }
    svg {
        color: #d7e9e7;
    }
`;

const Watermark = styled.svg`
    flex: 1;
    min-width: 0;
    height: 66px;
`;

const Workspace = styled.main`
    flex: 1;
    min-height: 0;
    display: flex;
    gap: 4px;
    border-left: 6px solid #566063;
    border-bottom: 5px solid #566063;
    background: #30393d;
`;

const Side = styled.aside`
    width: 130px;
    flex: none;
    display: flex;
    flex-direction: column;
    background: #2b3437;
    border-right: 1px solid #273033;
`;

const SideHead = styled.div`
    display: flex;
    align-items: center;
    gap: 3px;
    height: 20px;
    padding-left: 4px;
    background: #434b4e;
    color: #9aa1a4;
    white-space: nowrap;

    span {
        margin-left: 1px;
    }
`;

const SideTabs = styled.div`
    display: flex;
    height: 22px;
    padding-left: 2px;
    background: #434b4e;
`;

const SideTab = styled.button`
    width: 41px;
    display: flex;
    align-items: center;
    justify-content: center;
    color: ${(p) => (p.$active ? "#5fa3cf" : "#8e9599")};
`;

const TreeWrap = styled.div`
    flex: 1;
    min-height: 0;
    display: flex;
    padding-top: 3px;
`;

const TreeScroll = styled.div`
    width: 11px;
    padding: 8px 4px;
`;

const TreeThumb = styled.div`
    width: 3px;
    height: 42%;
    background: #1e2629;
`;

const Tree = styled.div`
    flex: 1;
    min-width: 0;
    display: flex;
    flex-direction: column;
    overflow: hidden;
`;

const kinds = {
    open: "background: #2a3438; color: #d6e9fa;",
    closed: "background: #182326; color: #92a9be;",
    plugin: "background: #3a383d; color: #bfc1c5;",
};

const iconColors = { open: "#b9dcff", closed: "#7390b8", plugin: "#cfd0d3" };

const TreeRow = styled.div`
    ${condensed}
    display: flex;
    align-items: center;
    gap: 4px;
    min-height: 0;
    flex: ${(p) => (p.$small ? "0 0 18px" : "1 1 20px")};
    padding: 0 3px 0 ${(p) => 5 + p.$level * 12}px;
    font-size: ${(p) => (p.$small ? 13 : 16)}px;
    line-height: 18px;
    white-space: nowrap;
    ${(p) => kinds[p.$kind]}

    > svg {
        color: ${(p) => iconColors[p.$kind]};
    }
`;

const Caret = styled.i`
    margin-left: auto;
    color: #141b1e;
`;

const Preview = styled.div`
    flex: 0 0 32px;
    display: flex;
    align-items: center;
    padding-left: 34px;
    background: #3a383d;
    color: #c03a62;
`;

const Roll = styled.section`
    flex: 1;
    min-width: 0;
    display: flex;
    flex-direction: column;
    border-left: 2px solid #262e31;
    background: #40494b;
`;

const RollTools = styled.div`
    display: flex;
    align-items: center;
    height: 21px;
    padding-left: 2px;
    background: #434b4e;
    border-bottom: 1px solid #343c3f;
    white-space: nowrap;
`;

const ToolGroup = styled.div`
    display: flex;
    margin-right: 13px;
`;

const Tool = styled.button`
    width: 18px;
    height: 18px;
    display: flex;
    align-items: center;
    justify-content: center;
    color: ${(p) => (p.$active ? "#f6ae3c" : "#e6eef0")};
`;

const RollTitle = styled.button`
    display: flex;
    align-items: center;
    gap: 4px;
    margin-left: 6px;
    font-size: 11px;
    font-weight: 600;

    svg {
        color: #80888b;
    }
`;

const RollWindow = styled.div`
    display: flex;
    align-items: center;
    gap: 7px;
    margin-left: auto;
`;

const RollGrid = styled.div`
    flex: 1;
    min-height: 0;
    display: grid;
    grid-template-columns: 47px 1fr 10px;
    grid-template-rows: 35px 1fr 8px 81px;
    border-bottom: 1px solid #30393d;
`;

const Corner = styled.svg`
    width: 46px;
    height: 35px;
    background: #434b4e;
`;

const TimeArea = styled.div`
    min-width: 0;
`;

const ScrollBar = styled.div`
    display: flex;
    justify-content: space-between;
    height: 18px;
    background: #373f43;
    border-bottom: 1px solid #2c3437;
`;

const ScrollThumb = styled.button`
    display: flex;
    align-items: center;
    width: 68%;
    padding-left: 4px;
    background: #525c5e;
    color: #2b3336;
`;

const ScrollEnd = styled.button`
    width: 17px;
    display: flex;
    align-items: center;
    justify-content: center;
    background: #5b6367;
    color: #31393c;
`;

const Ruler = styled.div`
    position: relative;
    height: 17px;
    background: #222c35;
`;

const RulerSong = styled.div`
    height: 100%;
    background: linear-gradient(#c76a6c, #b3575a);
    border-top: 1px solid #ee9796;
    border-bottom: 1px solid #6f3a40;
`;

const BarNumber = styled.span`
    position: absolute;
    top: 4px;
    padding-left: 1px;
    font: bold 9px/10px "Open Sans Condensed", "Open Sans", sans-serif;
    color: ${(p) => (p.$dim ? "#98a2a8" : "#ffc9c6")};
`;

const Keyboard = styled.div`
    position: relative;
    overflow: hidden;
    background: #edf2fc;
    border-right: 1px solid #1e262c;
`;

const Key = styled.div`
    position: absolute;
    left: 0;
    right: 0;
    display: flex;
    align-items: center;
    background: ${(p) => (p.$c ? "linear-gradient(90deg, #c3c8cd, #edf2fc 70%)" : "none")};
`;

const BlackKey = styled.div`
    width: 30px;
    height: 90%;
    background: linear-gradient(#4a4745, #2d2b2b);
    border: 1px solid #3a3837;
    border-left: 0;
`;

const KeyLabel = styled.span`
    margin-left: auto;
    padding-right: 1px;
    font: ${(p) => (p.$c ? "bold" : "normal")} 10px/12px "Liberation Sans", sans-serif;
    color: ${(p) => (p.$c ? "#454b54" : "#868c98")};
`;

const Lane = styled.div`
    position: relative;
    min-width: 0;
`;

const Canvas = styled.svg`
    position: absolute;
    inset: 0;
    width: 100%;
    height: 100%;
`;

const Note = styled.div`
    position: absolute;
    background: #ff9393;
    background-clip: padding-box;
    border: 1px solid transparent;
    border-left-width: 0;
    border-radius: 2px;
    box-shadow: inset 0 0 0 1px #f88a8c;
`;

const PlayLineMark = styled.div`
    position: absolute;
    top: 0;
    bottom: 0;
    width: 1px;
    background: #7f9497;
`;

const PlayHead = styled.svg`
    position: absolute;
    top: -17px;
    width: 16px;
    height: 11px;
    margin-left: -8px;
`;

const Pointer = styled.svg`
    position: absolute;
    left: 49%;
    top: 28%;
    width: 15px;
    height: 15px;
    margin-left: 2px;
    margin-top: 1px;
`;

const ResizeMark = styled.div`
    position: absolute;
    left: 75%;
    top: 40%;
    color: #7e898e;
`;

const SideScroll = styled.div`
    display: flex;
    flex-direction: column;
    background: ${(p) => (p.$light ? "#536361" : "#3a4545")};
    border-left: 1px solid #252e31;
`;

const SideThumb = styled.div`
    height: 28px;
    margin-top: 234px;
    background: #596462;
`;

const SideFoot = styled.div`
    height: 17px;
    margin-top: auto;
    background: #596462;
`;

const SideTop = styled.div`
    height: 17px;
    background: #596462;
`;

const Splitter = styled.div`
    grid-column: 1 / -1;
    background: #424a4a;
    border-top: 1px solid #232b2e;
    border-bottom: 1px solid #232b2e;
`;

const LaneBlank = styled.div`
    background: #424a4c;
    border-right: 1px solid #1e262c;
`;

const VelocityLane = styled.div`
    position: relative;
    min-width: 0;
    overflow: hidden;
`;

export default App;
